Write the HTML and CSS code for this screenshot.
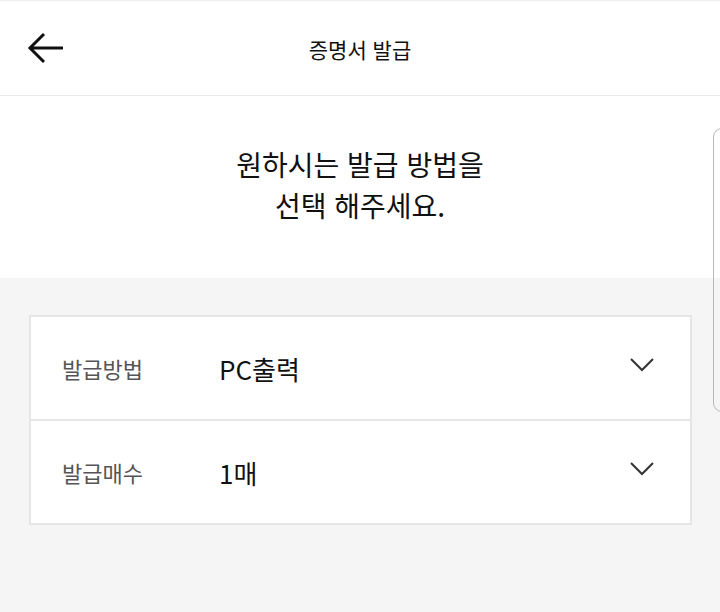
FILE: index.html
```html
<!DOCTYPE html>
<html lang="ko">
<head>
    <meta charset="UTF-8">
    <meta name="viewport" content="width=device-width, initial-scale=1.0">
    <title>증명서 발급</title>
    <link rel="stylesheet" href="styles.css">
</head>
<body>

    <div class="top">
        <a href="#" class="back">
            <svg width="40" height="34" viewBox="0 0 40 34">
                <path d="M37 16H5M18 2L4 16l14 14" fill="none" stroke="#111" stroke-width="3"/>
            </svg>
        </a>
        <p class="title">증명서 발급</p>
    </div>

    <div class="intro">
        <p>원하시는 발급 방법을<br>선택 해주세요.</p>
    </div>

    <div class="content">
        <div class="card">
            <div class="row">
                <span class="label">발급방법</span>
                <span class="value">PC출력</span>
                <svg class="chev" width="24" height="14" viewBox="0 0 24 14">
                    <path d="M1 1l11 11L23 1" fill="none" stroke="#333" stroke-width="2"/>
                </svg>
            </div>
            <div class="row">
                <span class="label">발급매수</span>
                <span class="value">1매</span>
                <svg class="chev" width="24" height="14" viewBox="0 0 24 14">
                    <path d="M1 1l11 11L23 1" fill="none" stroke="#333" stroke-width="2"/>
                </svg>
            </div>
        </div>
    </div>

    <div class="edge"></div>

</body>
</html>
```

FILE: styles.css
```css
body {
    margin: 0;
    padding: 0;
    height: 612px;
    overflow: hidden;
    background: #f5f5f5;
    font-family: "Noto Sans CJK KR", "Noto Sans", sans-serif;
    color: #111;
}

.top {
    height: 94px;
    background: #fff;
    border-top: 1px solid #eee;
    border-bottom: 1px solid #ebebeb;
    display: flex;
    align-items: center;
    justify-content: center;
    position: relative;
}

.back {
    position: absolute;
    left: 26px;
    top: 31px;
    display: block;
    height: 34px;
}

.title {
    margin: 0;
    font-size: 21px;
    padding-top: 2px;
}

.intro {
    height: 182px;
    background: #fff;
    display: flex;
    align-items: center;
    justify-content: center;
}

.intro p {
    margin: 0;
    text-align: center;
    font-size: 28px;
    line-height: 41px;
    padding-bottom: 4px;
}

.content {
    padding: 37px 28px 37px 29px;
}

.card {
    width: 659px;
    background: #fff;
    border: 2px solid #e6e6e6;
}

.row {
    height: 102px;
    display: flex;
    align-items: center;
    padding: 0 36px 0 31px;
}

.row + .row {
    border-top: 2px solid #e6e6e6;
}

.label {
    width: 157px;
    font-size: 22px;
    color: #555;
}

.value {
    flex: 1;
    font-size: 26px;
    color: #111;
}

.chev {
    margin-top: -6px;
}

.edge {
    position: absolute;
    left: 713px;
    top: 128px;
    width: 24px;
    height: 282px;
    border: 1px solid #b9b9b9;
    border-radius: 9px;
}
```
